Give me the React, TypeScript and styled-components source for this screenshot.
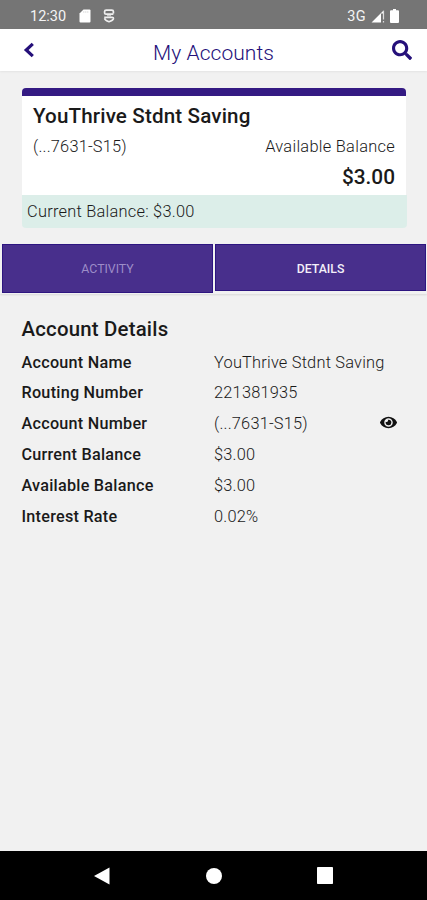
import React from "react";
import styled, { createGlobalStyle } from "styled-components";
import { FaEye, FaSearch } from "react-icons/fa";

const GlobalStyle = createGlobalStyle`
  * { box-sizing: border-box; }
  body { margin: 0; background: #f1f1f1; font-family: Roboto, "Liberation Sans", sans-serif; }
  button { font: inherit; border: 0; padding: 0; background: none; display: flex; }
`;

const Screen = styled.div`
  width: 427px;
  height: 900px;
  display: flex;
  flex-direction: column;
  background: #f1f1f1;
  color: #1a1a1a;
  overflow: hidden;
`;

const StatusBar = styled.div`
  height: 29px;
  flex: none;
  display: flex;
  align-items: center;
  justify-content: space-between;
  padding: 3px 28px 0 30px;
  background: #757575;
  color: #f4f4f4;
  font-size: 14.5px;
`;

const StatusGroup = styled.div<{ $gap: number }>`
  display: flex;
  align-items: center;
  gap: ${(p) => p.$gap}px;
`;

const Clock = styled.span`
  width: 37px;
`;

const Network = styled.span`
  letter-spacing: 0.3px;
`;

const Header = styled.header`
  height: 42px;
  flex: none;
  display: grid;
  grid-template-columns: 60px 1fr 60px;
  align-items: center;
  background: #fff;
  box-shadow: 0 1px 2px rgba(0, 0, 0, 0.06);
  color: #25107a;
`;

const Title = styled.h1`
  margin: 6px 0 0;
  text-align: center;
  font-size: 21px;
  line-height: 24px;
  font-weight: 300;
  letter-spacing: 0.05px;
`;

const BackButton = styled.button`
  color: #25107a;
  padding-left: 23px;
`;

const SearchButton = styled.button`
  color: #25107a;
  padding-left: 25px;
`;

const Card = styled.section`
  margin: 17px 20px 0 22px;
  height: 140px;
  flex: none;
  display: flex;
  flex-direction: column;
`;

const CardBody = styled.div`
  height: 107px;
  margin-right: 1px;
  padding: 9px 11px 0 11px;
  background: #fff;
  border-top: 8px solid #341a83;
  border-radius: 4px 4px 0 0;
`;

const CardTitle = styled.h2`
  margin: 0;
  font-size: 20.6px;
  line-height: 23px;
  font-weight: 500;
  letter-spacing: 0.15px;
`;

const CardRow = styled.div`
  display: flex;
  justify-content: space-between;
  margin-top: 9px;
  font-size: 16.4px;
  line-height: 20px;
  font-weight: 300;
`;

const Mask = styled.span`
  letter-spacing: 0.2px;
`;

const Available = styled.span`
  letter-spacing: 0.28px;
`;

const Amount = styled.div`
  margin-top: 8px;
  text-align: right;
  font-size: 20.8px;
  line-height: 24px;
  font-weight: 500;
`;

const CardFooter = styled.div`
  height: 33px;
  padding-left: 5px;
  border-radius: 0 0 4px 4px;
  background: #dceee9;
  font-size: 16.4px;
  line-height: 33px;
  font-weight: 300;
  letter-spacing: 0.24px;
`;

const Tabs = styled.nav`
  flex: none;
  height: 50px;
  margin-top: 16px;
  padding: 0 1px 0 2px;
  display: grid;
  grid-template-columns: 211px 211px;
  gap: 2px;
  box-shadow: 0 1px 2px rgba(0, 0, 0, 0.1);
`;

const Tab = styled.button<{ $active?: boolean }>`
  height: ${(p) => (p.$active ? 47 : 49)}px;
  align-items: center;
  justify-content: center;
  padding-top: ${(p) => (p.$active ? 3 : 1)}px;
  background: #482f8c;
  border: 1px solid #2d1580;
  color: ${(p) => (p.$active ? "#f3eff9" : "#9d8dc8")};
  font-size: 12.3px;
  font-weight: ${(p) => (p.$active ? 500 : 400)};
`;

const Details = styled.main`
  flex: 1;
  padding: 23px 22px 0 21.5px;
`;

const DetailsTitle = styled.h2`
  margin: 0 0 6.2px;
  font-size: 20.4px;
  line-height: 24px;
  font-weight: 500;
  letter-spacing: 0.2px;
`;

const DetailRow = styled.div`
  height: 30.8px;
  display: grid;
  grid-template-columns: 192.5px 1fr auto;
  align-items: center;
  font-size: 16.2px;
  line-height: 20px;
`;

const Label = styled.span`
  font-weight: 500;
  letter-spacing: 0.25px;
`;

const Value = styled.span`
  font-weight: 300;
  font-size: 16.4px;
  letter-spacing: 0.2px;
`;

const RevealButton = styled.button`
  color: #111;
  margin: -3px 8px 0 0;
`;

const NavBar = styled.footer`
  height: 49px;
  flex: none;
  display: flex;
  align-items: center;
  justify-content: space-between;
  padding: 0 94px 0 93px;
  background: #000;
`;

const rows: { label: string; value: string; hidden?: boolean }[] = [
  { label: "Account Name", value: "YouThrive Stdnt Saving" },
  { label: "Routing Number", value: "221381935" },
  { label: "Account Number", value: "(...7631-S15)", hidden: true },
  { label: "Current Balance", value: "$3.00" },
  { label: "Available Balance", value: "$3.00" },
  { label: "Interest Rate", value: "0.02%" },
];

export default function App() {
  return (
    <>
      <GlobalStyle />
      <Screen>
        <StatusBar>
          <StatusGroup $gap={12}>
            <Clock>12:30</Clock>
            <svg width="12" height="14" viewBox="0 0 12 14" fill="#fff">
              <path d="M4.5 0.5H10.5Q11.5 0.5 11.5 1.5V12.5Q11.5 13.5 10.5 13.5H1.5Q0.5 13.5 0.5 12.5V4.5Z" />
              <path d="M4.8 2V4M6.8 2V4M8.8 2V4" stroke="#ccc" strokeWidth="0.6" />
            </svg>
            <svg width="12" height="14" viewBox="0 0 12 14" fill="none" stroke="#eee" strokeWidth="1.7">
              <path d="M10.4 4.4V2.6Q10.4 1.1 8.8 1.1H3.2Q1.6 1.1 1.6 2.6V4Q1.6 5.2 3 5.2H10.4M1.2 8.4H9Q10.6 8.4 10.4 9.7Q10 11.4 6 12.7Q2 11.4 1.6 9.4" />
              <path d="M4 6.8H8" strokeWidth="0.9" />
            </svg>
          </StatusGroup>
          <StatusGroup $gap={5}>
            <Network>3G</Network>
            <svg width="14" height="13" viewBox="0 0 14 13">
              <path d="M0.5 12.5L12.5 0.5V3.5H10V12.5Z" fill="#fff" />
              <path d="M12.5 0.8V9.5M12.5 11V12.6" stroke="#ddd" strokeWidth="1.2" />
            </svg>
            <svg width="9" height="14" viewBox="0 0 9 14">
              <path d="M3 0H6V1.3H8Q9 1.3 9 2.3V13Q9 14 8 14H1Q0 14 0 13V2.3Q0 1.3 1 1.3H3Z" fill="#fff" />
            </svg>
          </StatusGroup>
        </StatusBar>
        <Header>
          <BackButton aria-label="Back">
            <svg width="12" height="16" viewBox="0 0 12 16" fill="none" stroke="currentColor" strokeWidth="3.2">
              <path d="M9.8 1.8L3.2 8L9.8 14.2" />
            </svg>
          </BackButton>
          <Title>My Accounts</Title>
          <SearchButton aria-label="Search"><FaSearch size={20} /></SearchButton>
        </Header>
        <Card>
          <CardBody>
            <CardTitle>YouThrive Stdnt Saving</CardTitle>
            <CardRow>
              <Mask>(...7631-S15)</Mask>
              <Available>Available Balance</Available>
            </CardRow>
            <Amount>$3.00</Amount>
          </CardBody>
          <CardFooter>Current Balance: $3.00</CardFooter>
        </Card>
        <Tabs>
          <Tab>ACTIVITY</Tab>
          <Tab $active>DETAILS</Tab>
        </Tabs>
        <Details>
          <DetailsTitle>Account Details</DetailsTitle>
          {rows.map((r) => (
            <DetailRow key={r.label}>
              <Label>{r.label}</Label>
              <Value>{r.value}</Value>
              {r.hidden && (
                <RevealButton aria-label="Show account number"><FaEye size={17} /></RevealButton>
              )}
            </DetailRow>
          ))}
        </Details>
        <NavBar>
          <svg width="17" height="18" viewBox="0 0 17 18"><path d="M1 9L16.5 0.5V17.5Z" fill="#fff" /></svg>
          <svg width="16" height="16" viewBox="0 0 16 16"><circle cx="8" cy="8" r="8" fill="#fff" /></svg>
          <svg width="16" height="17" viewBox="0 0 16 17"><rect width="16" height="17" rx="0.8" fill="#fff" /></svg>
        </NavBar>
      </Screen>
    </>
  );
}
